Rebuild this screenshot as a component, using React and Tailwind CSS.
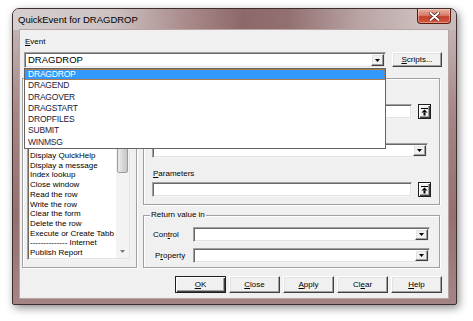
import React from "react";

const font = "font-['Liberation_Sans',Arial,sans-serif]";

const sunken =
  "bg-white border border-t-[#a0a0a0] border-l-[#a0a0a0] border-r-[#f4f4f4] border-b-[#f4f4f4] shadow-[inset_1px_1px_0_#696969,inset_-1px_-1px_0_#e3e3e3]";
const raised =
  "bg-[#f0f0f0] border border-t-white border-l-white border-r-[#404040] border-b-[#404040] shadow-[inset_-1px_-1px_0_#a0a0a0,inset_1px_1px_0_#e3e3e3]";
const boxed =
  "bg-[#f0f0f0] border border-[#1e1e1e] shadow-[inset_1px_1px_0_#fff,inset_-1px_-1px_0_#404040,inset_-2px_-2px_0_#a0a0a0]";
const etched = "border border-[#a0a0a0] shadow-[inset_1px_1px_0_#fff,1px_1px_0_#fff]";

function DownArrow() {
  return (
    <svg width="5" height="3" viewBox="0 0 5 3" aria-hidden>
      <path d="M0 0h5L2.5 3z" fill="#000" />
    </svg>
  );
}

function TopArrow() {
  return (
    <svg width="7" height="8" viewBox="0 0 7 8" aria-hidden>
      <rect x="0" y="0" width="7" height="1" fill="#000" />
      <path d="M3.5 1.5L0.5 4.5h6z" fill="#000" />
      <rect x="2.5" y="4.5" width="2" height="3" fill="#000" />
    </svg>
  );
}

function Combo({ className, text }) {
  return (
    <div className={`${sunken} flex items-stretch ${className}`}>
      <div className="flex-1 pl-[3px] text-[9.5px] leading-[14px]">{text}</div>
      <div className={`${raised} m-[1px] flex w-[13px] items-center justify-center`}>
        <DownArrow />
      </div>
    </div>
  );
}

function Btn({ children, def }) {
  return (
    <div
      className={`${def ? boxed : raised} flex h-[17px] w-[51px] items-center justify-center text-[8px] leading-[10px]`}
    >
      {children}
    </div>
  );
}

const events = ["DRAGDROP", "DRAGEND", "DRAGOVER", "DRAGSTART", "DROPFILES", "SUBMIT", "WINMSG"];

const actions = [
  "Display QuickHelp",
  "Display a message",
  "Index lookup",
  "Close window",
  "Read the row",
  "Write the row",
  "Clear the form",
  "Delete the row",
  "Execute or Create Tabb",
  "-------------- Internet",
  "Publish Report",
];

export default function App() {
  return (
    <div className={`${font} h-[321px] w-[473px] overflow-hidden bg-white pl-[12px] pt-[8px]`}>
      <div className="flex h-[297px] w-[445px] flex-col rounded-t-[7px] rounded-b-[2px] border border-[#3d2d2d] bg-[linear-gradient(180deg,#c9bebe_0%,#a68686_35%,#957070_70%,#a48585_100%)] shadow-[2px_3px_9px_rgba(0,0,0,0.45)]">
        {/* title bar */}
        <div className="relative flex h-[21px] items-center rounded-t-[6px] bg-[linear-gradient(90deg,#d5cfcf_0%,#cdc3c3_22%,#a88888_40%,#8d6868_52%,#927070_62%,#b9a3a3_78%,#cdbfbf_92%,#c9baba_100%)] pl-[5px]">
          <span className="text-[9.5px] leading-[12px] text-black">QuickEvent for DRAGDROP</span>
          <div className="absolute right-[5px] top-0 flex h-[15px] w-[34px] items-center justify-center rounded-b-[4px] border border-t-0 border-[#5a1a12] bg-[linear-gradient(180deg,#e7b0a3_0%,#d77d6a_45%,#c2402b_55%,#d4583f_100%)] shadow-[inset_0_0_0_1px_rgba(255,220,210,0.45)]">
            <svg width="11" height="9" viewBox="0 0 11 9" aria-hidden>
              <path
                d="M1.5 1l8 7M9.5 1l-8 7"
                stroke="#4a1a14"
                strokeWidth="3.4"
                strokeLinecap="round"
              />
              <path d="M1.5 1l8 7M9.5 1l-8 7" stroke="#fff" strokeWidth="2" strokeLinecap="round" />
            </svg>
          </div>
        </div>

        {/* client area */}
        <div className="relative ml-[7px] flex h-[268px] w-[428px] flex-col bg-[#f0f0f0] text-black shadow-[0_0_0_1px_#b8a4a4]">
          <div className="ml-[5px] mt-[6px] h-[12px] text-[8px] leading-[12px]">
            <span className="underline decoration-[1px] underline-offset-[1px]">E</span>vent
          </div>

          <div className="ml-[4px] mt-[4px] flex items-start gap-[6px]">
            <Combo className="h-[16px] w-[362px]" text="DRAGDROP" />
            <div className={`${raised} flex h-[15px] w-[50px] items-center justify-center text-[8px] leading-[10px]`}>
              <span>
                <span className="underline decoration-[1px] underline-offset-[1px]">S</span>cripts...
              </span>
            </div>
          </div>

          <div className="ml-[2px] mt-[10px] flex gap-[6px]">
            {/* left group with actions list */}
            <div className={`${etched} h-[190px] w-[115px] pl-[4px] pt-[11px]`}>
              <div className={`${sunken} flex h-[170px] w-[104px] overflow-hidden`}>
                <div className="min-w-0 flex-1 overflow-hidden pl-[2px] pt-[60px] text-[8px] leading-[9.7px]">
                  {actions.map((a) => (
                    <div key={a} className="whitespace-nowrap">
                      {a}
                    </div>
                  ))}
                </div>
                <div className="my-[1px] mr-[1px] flex w-[13px] flex-col bg-[#f3f3f3]">
                  <div className="h-[13px]" />
                  <div className="ml-[1px] h-[68px] w-[11px] rounded-[2px] border border-[#9a9a9a] bg-[linear-gradient(90deg,#ececec,#d4d4d4_60%,#c6c6c6)]" />
                  <div className="flex-1" />
                  <div className="flex h-[13px] items-center justify-center">
                    <svg width="5" height="3" viewBox="0 0 5 3" aria-hidden>
                      <path d="M0 0h5L2.5 3z" fill="#7a7a7a" />
                    </svg>
                  </div>
                </div>
              </div>
            </div>

            {/* right column */}
            <div className="flex w-[297px] flex-col">
              <div className={`${etched} h-[127px] pl-[8px]`}>
                <div className="mt-[25px] flex items-center gap-[6px]">
                  <div className={`${sunken} h-[15px] w-[260px]`} />
                  <div className={`${boxed} flex h-[15px] w-[13px] items-center justify-center`}>
                    <TopArrow />
                  </div>
                </div>
                <Combo className="mt-[24px] h-[15px] w-[276px]" text="" />
                <div className="ml-[1px] mt-[11px] h-[10px] text-[8px] leading-[10px]">
                  <span className="underline decoration-[1px] underline-offset-[1px]">P</span>arameters
                </div>
                <div className="mt-[3px] flex items-center gap-[6px]">
                  <div className={`${sunken} h-[15px] w-[260px]`} />
                  <div className={`${boxed} flex h-[15px] w-[13px] items-center justify-center`}>
                    <TopArrow />
                  </div>
                </div>
              </div>

              <div className={`${etched} relative mt-[10px] h-[53px] pl-[9px]`}>
                <div className="absolute left-[6px] top-[-6px] bg-[#f0f0f0] px-[1px] text-[8px] leading-[10px]">
                  Return value in
                </div>
                <div className="mt-[11px] flex items-center">
                  <div className="w-[40px] text-[8px] leading-[10px]">
                    Con<span className="underline decoration-[1px] underline-offset-[1px]">t</span>rol
                  </div>
                  <Combo className="h-[15px] w-[237px]" text="" />
                </div>
                <div className="mt-[6px] flex items-center">
                  <div className="w-[40px] pl-[2px] text-[8px] leading-[10px]">
                    P<span className="underline decoration-[1px] underline-offset-[1px]">r</span>operty
                  </div>
                  <Combo className="h-[15px] w-[237px]" text="" />
                </div>
              </div>
            </div>
          </div>

          <div className="ml-[155px] mt-[8px] flex gap-[3px]">
            <Btn def>
              <span className="underline decoration-[1px] underline-offset-[1px]">O</span>K
            </Btn>
            <Btn>
              <span className="underline decoration-[1px] underline-offset-[1px]">C</span>lose
            </Btn>
            <Btn>
              <span className="underline decoration-[1px] underline-offset-[1px]">A</span>pply
            </Btn>
            <Btn>
              Cl<span className="underline decoration-[1px] underline-offset-[1px]">e</span>ar
            </Btn>
            <Btn>
              <span className="underline decoration-[1px] underline-offset-[1px]">H</span>elp
            </Btn>
          </div>

          {/* open dropdown of the Event combo */}
          <div className="absolute left-[4px] top-[38px] h-[81px] w-[362px] border border-[#646464] bg-white">
            {events.map((e, i) => (
              <div
                key={e}
                className={
                  i === 0
                    ? "h-[11.3px] border border-dotted border-[#b07a4a] bg-[#3399ff] pl-[2px] text-[8.5px] leading-[9.3px] tracking-[-0.2px] text-white"
                    : "h-[11.3px] pl-[3px] text-[8.5px] leading-[11.3px] tracking-[-0.2px] text-[#1a1a3c]"
                }
              >
                {e}
              </div>
            ))}
          </div>
        </div>
      </div>
    </div>
  );
}
